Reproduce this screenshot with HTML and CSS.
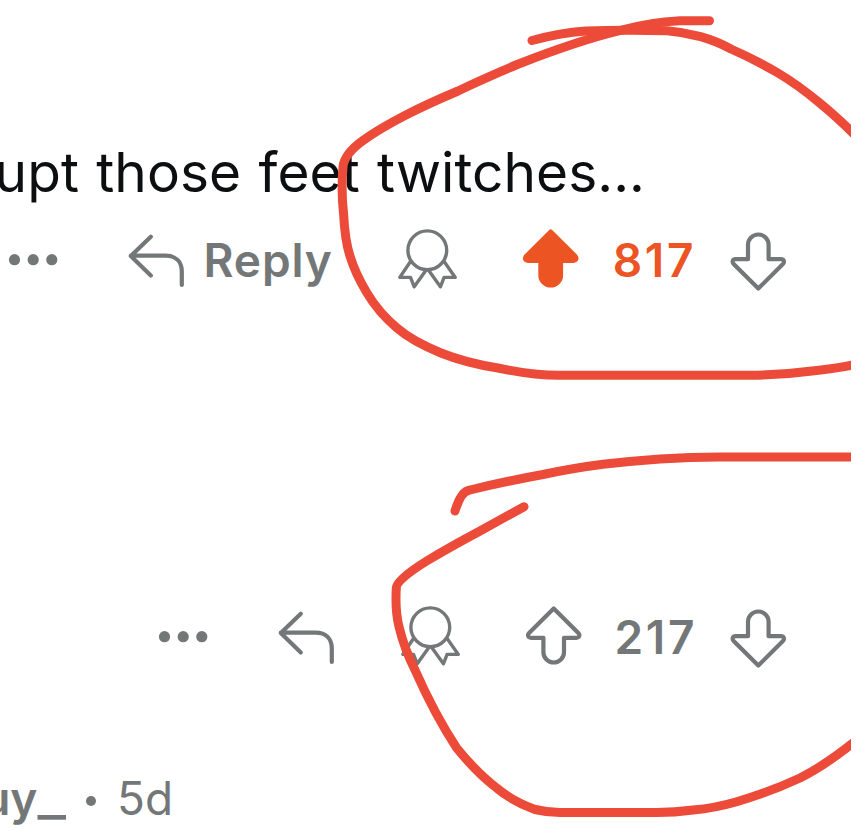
FILE: index.html
```html
<!DOCTYPE html>
<html lang="en">
<head>
<meta charset="utf-8">
<title>Comments</title>
<link rel="stylesheet" href="styles.css">
</head>
<body>
<svg class="symbols" aria-hidden="true">
  <symbol id="dots" viewBox="0 0 58 64"><g fill="currentColor"><circle cx="10.5" cy="31.7" r="5.6"/><circle cx="29.2" cy="31.7" r="5.6"/><circle cx="47.8" cy="31.7" r="5.6"/></g></symbol>
  <symbol id="reply" viewBox="0 0 62 64"><path d="M24.8 8.7 4.8 28 24.8 47.5M4.8 27.7H39.5C50 27.7 55.8 34 55.8 43.5V57" class="line"/></symbol>
  <symbol id="award" viewBox="0 0 64 64"><g class="line thin"><circle cx="31.3" cy="22.3" r="19.4"/><path d="M14.5 33.5 3.8 49.4H14.5L18.2 58.8 30 42.3M48.1 33.5 59.3 49.4H48.1L44.4 58.8 32.6 42.3"/></g></symbol>
  <symbol id="arrow" viewBox="0 0 62 64"><path d="M30.7 3.4 6.3 27.8C3.8 30.4 5.3 32.8 8 32.8H20.4V47.2A10.3 10.3 0 0 0 41 47.2V32.8H53.4C56.1 32.8 57.6 30.4 55.1 27.8Z" class="line"/></symbol>
</svg>
<main class="screen">
  <p class="comment"><span>upt those feet twitches...</span></p>
  <div class="actions">
    <svg class="dots"><use href="#dots"/></svg>
    <svg class="reply"><use href="#reply"/></svg>
    <span class="label">Reply</span>
    <svg class="award"><use href="#award"/></svg>
    <svg class="vote voted"><use href="#arrow"/></svg>
    <span class="score voted">817</span>
    <svg class="vote down"><use href="#arrow"/></svg>
  </div>
  <div class="actions nested">
    <svg class="dots"><use href="#dots"/></svg>
    <svg class="reply"><use href="#reply"/></svg>
    <svg class="award"><use href="#award"/></svg>
    <svg class="vote"><use href="#arrow"/></svg>
    <span class="score">217</span>
    <svg class="vote down"><use href="#arrow"/></svg>
  </div>
  <div class="byline"><span class="user"><b>uy<span class="tail">_</span></b></span><i class="bullet"></i><span class="age">5d</span></div>
  <svg class="marker" viewBox="0 0 851 831">
    <path d="M709.5 20.7H680Q650 22 619.6 30.7C585 39 552 51 518.6 64Q485 78 458 91Q425 105 404 116Q379 129 363.7 140Q344 154 343 167Q341 190 343.5 213Q345 241 350 256Q355 273 367 293Q379 313 397 328Q412 341 441 353Q466 363 498 368Q532 375.3 559 375.3H751Q782 375 812 371Q832 369 858 364"/>
    <path d="M532 40.5Q559 33 586 31Q620 29.8 667 30.7Q684 32 700.6 36.7Q716 41 731 49Q756 60 778 73Q798 85 818.5 102Q837 117 858 138"/>
    <path d="M455 511Q461 491 470 490Q507 481 543 474.5Q574 468 603 464.3Q632 461 660 459Q690 457 720 457H858"/>
    <path d="M524 506.7 480 531Q450 547 426.7 561Q396 580 396.3 588Q395 611 399 626.7Q404 648 415 670Q435 715 456.7 748Q477 773 496.7 788Q512 801 535 809.5Q548 812.5 560 812.5H656.7Q675 812.5 693 810Q715 808 736.7 801.7Q770 792 800 778Q826 765 858 739"/>
  </svg>
</main>
</body>
</html>
```
FILE: styles.css
```css
body {
  margin: 0;
  background: #fff;
  font-family: Inter, "Liberation Sans", sans-serif;
  color: #747778;
}

.symbols {
  position: absolute;
  width: 0;
  height: 0;
}

.screen {
  position: relative;
  width: 858px;
  height: 831px;
  overflow: hidden;
}

.comment {
  display: flex;
  justify-content: flex-end;
  width: 645px;
  height: 86px;
  margin: 0;
  padding-top: 142px;
  font-size: 55px;
  line-height: 60px;
  letter-spacing: 0.07px;
  word-spacing: 1.8px;
  white-space: nowrap;
  color: #0d0e0f;
}

.actions {
  display: flex;
  align-items: center;
  height: 64px;
  padding-left: 4px;
  font-size: 46px;
  font-weight: 600;
}

.actions svg {
  flex: none;
  height: 64px;
}

.line {
  fill: var(--icon-fill, none);
  stroke: currentColor;
  stroke-width: 4.2;
  stroke-linecap: round;
  stroke-linejoin: round;
}

.thin {
  stroke-width: 3.4;
}

.dots {
  width: 58px;
  margin-right: 64px;
}

.reply {
  width: 62px;
}

.label {
  box-sizing: border-box;
  width: 208px;
  padding-left: 15.5px;
  letter-spacing: 0.9px;
}

.award {
  width: 64px;
  margin-right: 60px;
}

.vote {
  width: 62px;
}

.voted {
  --icon-fill: #ed5424;
  color: #ed5424;
}

.score {
  box-sizing: border-box;
  width: 144.5px;
  padding-right: 30.5px;
  letter-spacing: 2.6px;
  text-align: right;
}

.down {
  transform: rotate(180deg);
}

.nested {
  margin-top: 313px;
  padding-left: 154px;
}

.nested .reply {
  margin-right: 60.5px;
}

.nested .score {
  width: 142.5px;
  padding-right: 30px;
}

.byline {
  display: flex;
  align-items: center;
  height: 60px;
  margin-top: 99px;
  font-size: 46px;
  white-space: nowrap;
}

.user {
  display: flex;
  justify-content: flex-end;
  width: 67px;
}

.user b {
  font-weight: 600;
}

.tail {
  display: inline-block;
  margin-left: 4px;
  margin-right: 4px;
  transform: scaleX(1.32);
}

.bullet {
  width: 10px;
  height: 10px;
  margin: 5px 21px 0 19px;
  border-radius: 50%;
  background: currentColor;
}

.marker {
  position: absolute;
  top: 0;
  left: 0;
  width: 851px;
  height: 831px;
  overflow: hidden;
  fill: none;
  stroke: #ec4b3a;
  stroke-width: 9;
  stroke-linecap: round;
  stroke-linejoin: round;
}
```
